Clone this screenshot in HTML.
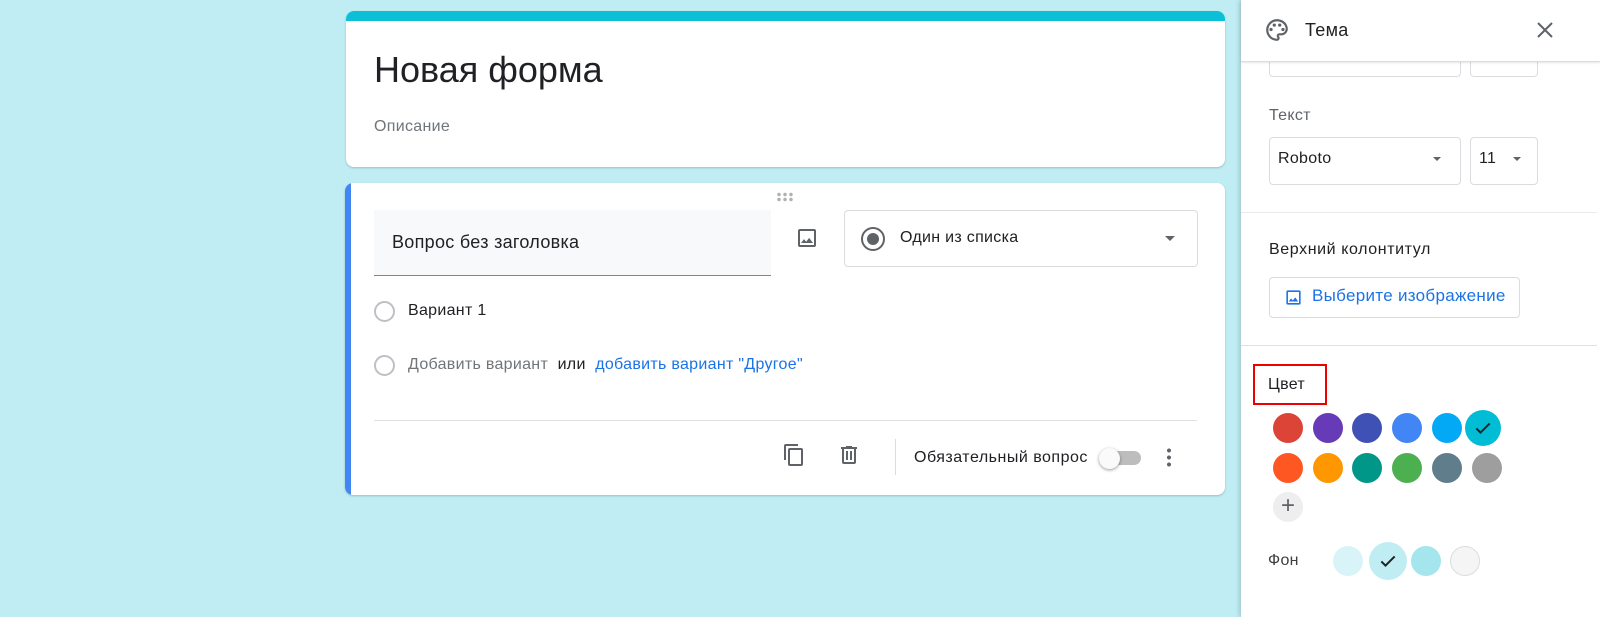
<!DOCTYPE html><html><head><meta charset="utf-8"><style>
*{box-sizing:border-box;margin:0;padding:0}
body{width:1600px;height:617px;overflow:hidden;background:#bfedf3;font-family:"Liberation Sans",Arial,sans-serif;color:#202124;position:relative}
.a{position:absolute;white-space:nowrap}
.card{background:#fff;border-radius:8px;box-shadow:0 1px 2px rgba(0,0,0,.2)}
.c{border-radius:50%;position:absolute;width:30px;height:30px}
.t{letter-spacing:.3px}
</style></head><body>
<div class="a card" style="left:346px;top:11px;width:879px;height:156px;overflow:hidden">
<div class="a" style="left:0;top:0;width:100%;height:10px;background:#0bc0d6"></div>
<div class="a" style="left:28px;top:38px;font-size:36px;color:#202124">Новая форма</div>
<div class="a t" style="left:28px;top:107px;font-size:16px;color:#70757a">Описание</div>
</div>
<div class="a card" style="left:345px;top:183px;width:880px;height:312px;overflow:hidden">
<div class="a" style="left:0;top:0;width:6px;height:100%;background:#4285f4"></div>
<div class="a" style="left:431px;top:9px;width:18px;height:10px;background:radial-gradient(circle,#b0b0b0 1.5px,transparent 2px) 0 0/6px 5px"></div>
<div class="a" style="left:29px;top:27px;width:397px;height:66px;background:#f8f9fa;border-bottom:1px solid #80868b"></div>
<div class="a t" style="left:47px;top:49px;font-size:18px">Вопрос без заголовка</div>
<svg class="a" style="left:450px;top:43px" width="24" height="24" viewBox="0 0 24 24"><path fill="#5f6368" d="M19 5v14H5V5h14m0-2H5a2 2 0 0 0-2 2v14a2 2 0 0 0 2 2h14a2 2 0 0 0 2-2V5a2 2 0 0 0-2-2zm-4.86 8.86-3 3.87L9 13.14 6 17h12l-3.86-5.14z"/></svg>
<div class="a" style="left:499px;top:27px;width:354px;height:57px;border:1px solid #dadce0;border-radius:4px"></div>
<div class="a" style="left:516px;top:44px;width:24px;height:24px;border:2px solid #5f6368;border-radius:50%"><div style="margin:4px;width:12px;height:12px;border-radius:50%;background:#5f6368"></div></div>
<div class="a t" style="left:555px;top:46px;font-size:16px;color:#202124">Один из списка</div>
<div class="a" style="left:820px;top:53px;border:5px solid transparent;border-top-color:#5f6368"></div>
<div class="a" style="left:29px;top:118px;width:21px;height:21px;border:2px solid #bdc1c6;border-radius:50%"></div>
<div class="a t" style="left:63px;top:119px;font-size:16px">Вариант 1</div>
<div class="a" style="left:29px;top:172px;width:21px;height:21px;border:2px solid #bdc1c6;border-radius:50%"></div>
<div class="a t" style="left:63px;top:173px;font-size:16px;color:#70757a">Добавить вариант <span style="color:#202124">&nbsp;или&nbsp;</span> <span style="color:#1a73e8">добавить вариант "Другое"</span></div>
<div class="a" style="left:29px;top:237px;width:823px;height:1px;background:#e0e0e0"></div>
<svg class="a" style="left:437px;top:260px" width="24" height="24" viewBox="0 0 24 24"><path fill="#5f6368" d="M16 1H4a2 2 0 0 0-2 2v14h2V3h12V1zm3 4H8a2 2 0 0 0-2 2v14a2 2 0 0 0 2 2h11a2 2 0 0 0 2-2V7a2 2 0 0 0-2-2zm0 16H8V7h11v14z"/></svg>
<svg class="a" style="left:492px;top:260px" width="24" height="24" viewBox="0 0 24 24"><path fill="#5f6368" d="M15 4V3H9v1H4v2h1v13a2 2 0 0 0 2 2h10a2 2 0 0 0 2-2V6h1V4h-5zm2 15H7V6h10v13zM9 8h2v9H9zm4 0h2v9h-2z"/></svg>
<div class="a" style="left:550px;top:256px;width:1px;height:36px;background:#dadce0"></div>
<div class="a" style="left:569px;top:266px;font-size:16px;letter-spacing:.5px;color:#202124">Обязательный вопрос</div>
<div class="a" style="left:758px;top:268px;width:38px;height:14px;border-radius:7px;background:#bdbdbd"></div>
<div class="a" style="left:754px;top:265px;width:21px;height:21px;border-radius:50%;background:#fafafa;box-shadow:0 1px 3px rgba(0,0,0,.4)"></div>
<div class="a" style="left:822px;top:264px;width:4px;height:20px;background:radial-gradient(circle,#5f6368 1.8px,transparent 2.2px) 0 0/4px 7px"></div>
</div>
<div class="a" style="left:1241px;top:0;width:359px;height:617px;background:#fff;box-shadow:-2px 0 4px rgba(0,0,0,.15)">
<div class="a" style="left:0;top:0;width:359px;height:62px;border-bottom:1px solid #dadce0;box-shadow:0 1px 2px rgba(0,0,0,.1);background:#fff;z-index:2">
<svg class="a" style="left:23px;top:17px" width="26" height="26" viewBox="0 0 24 24"><path fill="#5f6368" d="M12 2C6.490 2 2 6.49 2 12s4.49 10 10 10a2.5 2.5 0 0 0 2.5-2.5c0-.61-.23-1.2-.64-1.67a.53.53 0 0 1-.13-.33c0-.28.22-.5.5-.5H16c3.31 0 6-2.690 6-6 0-4.96-4.49-9-10-9zm4 13h-1.77c-1.38 0-2.5 1.12-2.5 2.5 0 .61.22 1.19.63 1.65.06.07.14.19.14.35 0 .28-.22.5-.5.5-4.41 0-8-3.59-8-8s3.59-8 8-8 8 3.14 8 7c0 2.21-1.79 4-4 4z"/><circle fill="#5f6368" cx="6.5" cy="11.5" r="1.5"/><circle fill="#5f6368" cx="9.5" cy="7.5" r="1.5"/><circle fill="#5f6368" cx="14.5" cy="7.5" r="1.5"/><circle fill="#5f6368" cx="17.5" cy="11.5" r="1.5"/></svg>
<div class="a t" style="left:64px;top:20px;font-size:18px">Тема</div>
<svg class="a" style="left:292px;top:18px" width="24" height="24" viewBox="0 0 24 24"><path stroke="#5f6368" stroke-width="2" d="M5 5l14 14M19 5L5 19"/></svg>
</div>
<div class="a" style="left:28px;top:40px;width:192px;height:37px;border:1px solid #dadce0;border-radius:4px"></div>
<div class="a" style="left:229px;top:40px;width:68px;height:37px;border:1px solid #dadce0;border-radius:4px"></div>
<div class="a t" style="left:28px;top:107px;font-size:16px;color:#5f6368">Текст</div>
<div class="a" style="left:28px;top:137px;width:192px;height:48px;border:1px solid #dadce0;border-radius:4px"></div>
<div class="a t" style="left:37px;top:150px;font-size:16px">Roboto</div>
<div class="a" style="left:192px;top:157px;border:4px solid transparent;border-top-color:#5f6368"></div>
<div class="a" style="left:229px;top:137px;width:68px;height:48px;border:1px solid #dadce0;border-radius:4px"></div>
<div class="a t" style="left:238px;top:150px;font-size:16px">11</div>
<div class="a" style="left:272px;top:157px;border:4px solid transparent;border-top-color:#5f6368"></div>
<div class="a" style="left:0;top:212px;width:356px;height:1px;background:#e8eaed"></div>
<div class="a" style="left:28px;top:241px;font-size:16px;letter-spacing:.6px">Верхний колонтитул</div>
<div class="a" style="left:28px;top:277px;width:251px;height:41px;border:1px solid #dadce0;border-radius:4px"></div>
<svg class="a" style="left:43px;top:288px" width="19" height="19" viewBox="0 0 24 24"><path fill="#1a73e8" d="M19 5v14H5V5h14m0-2H5a2 2 0 0 0-2 2v14a2 2 0 0 0 2 2h14a2 2 0 0 0 2-2V5a2 2 0 0 0-2-2zm-4.86 8.86-3 3.87L9 13.14 6 17h12l-3.86-5.14z"/></svg>
<div class="a" style="left:71px;top:286px;font-size:17px;letter-spacing:.3px;color:#1a73e8">Выберите изображение</div>
<div class="a" style="left:0;top:345px;width:356px;height:1px;background:#e0e0e0"></div>
<div class="a" style="left:12px;top:364px;width:74px;height:41px;border:2px solid #e00"></div>
<div class="a t" style="left:27px;top:376px;font-size:16px">Цвет</div>
<div class="c" style="left:32px;top:413px;background:#db4437"></div>
<div class="c" style="left:72px;top:413px;background:#673ab7"></div>
<div class="c" style="left:111px;top:413px;background:#3f51b5"></div>
<div class="c" style="left:151px;top:413px;background:#4285f4"></div>
<div class="c" style="left:191px;top:413px;background:#03a9f4"></div>
<div class="c" style="left:224px;top:410px;width:36px;height:36px;background:#00bcd4"></div>
<svg class="a" style="left:232px;top:418px" width="20" height="20" viewBox="0 0 24 24"><path fill="none" stroke="#202124" stroke-width="2.4" d="M4 12.5l5 5L20 6.5"/></svg>
<div class="c" style="left:32px;top:453px;background:#ff5722"></div>
<div class="c" style="left:72px;top:453px;background:#ff9800"></div>
<div class="c" style="left:111px;top:453px;background:#009688"></div>
<div class="c" style="left:151px;top:453px;background:#4caf50"></div>
<div class="c" style="left:191px;top:453px;background:#607d8b"></div>
<div class="c" style="left:231px;top:453px;background:#9e9e9e"></div>
<div class="c" style="left:32px;top:492px;background:#eeeeee;color:#5f6368;font-size:24px;line-height:28px;text-align:center">+</div>
<div class="a t" style="left:27px;top:552px;font-size:16px;color:#3c4043">Фон</div>
<div class="c" style="left:92px;top:546px;background:#d9f4f8"></div>
<div class="c" style="left:128px;top:542px;width:38px;height:38px;background:#bfedf3"></div>
<svg class="a" style="left:137px;top:551px" width="20" height="20" viewBox="0 0 24 24"><path fill="none" stroke="#202124" stroke-width="2.4" d="M4 12.5l5 5L20 6.5"/></svg>
<div class="c" style="left:170px;top:546px;background:#a5e6ee"></div>
<div class="c" style="left:209px;top:546px;background:#f5f5f5;border:1px solid #dadce0"></div>
</div>
</body></html>
